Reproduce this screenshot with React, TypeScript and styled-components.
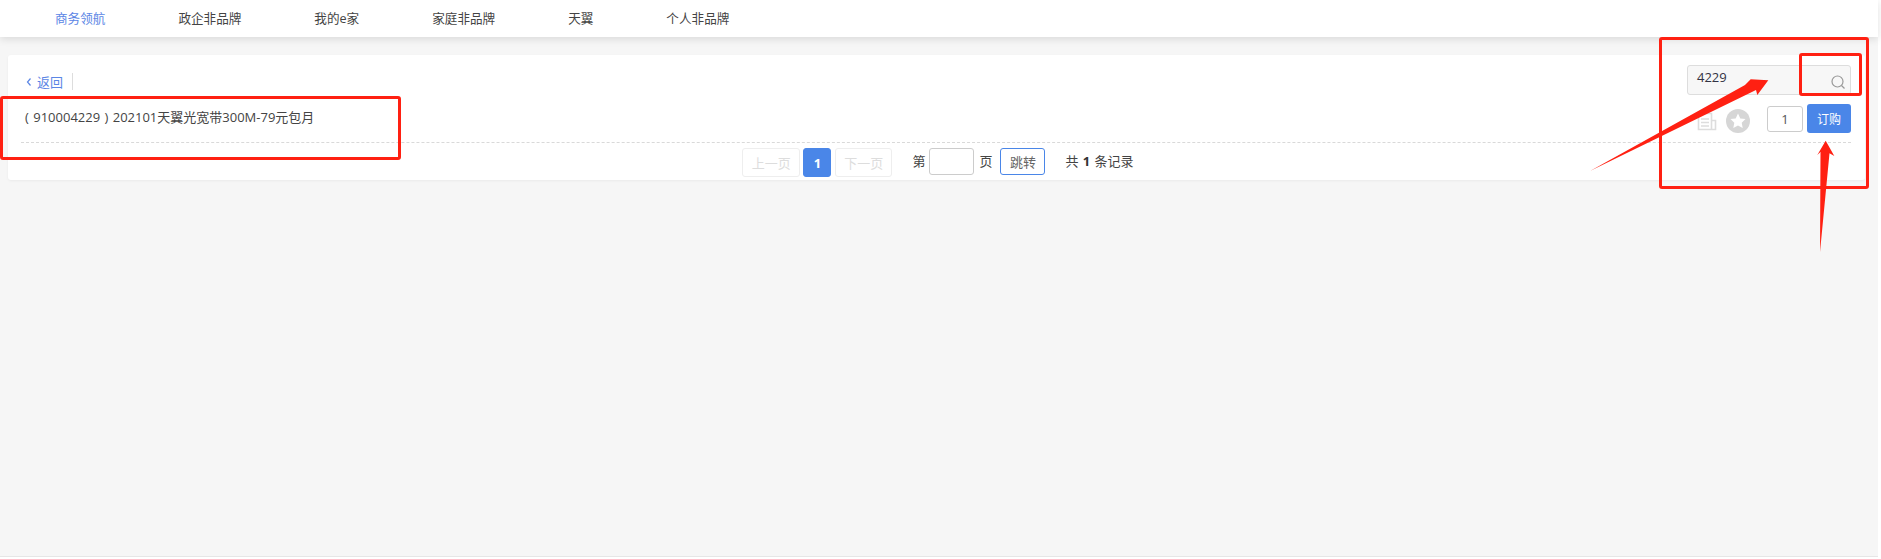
import React from "react";
import styled, { createGlobalStyle } from "styled-components";

const Global = createGlobalStyle`
  html, body { margin: 0; padding: 0; background: #fff; }
  body { font-family: "Open Sans", "Noto Sans CJK SC", sans-serif; font-size: 13px; color: #444; }
  * { box-sizing: border-box; }
`;

const Page = styled.div`
  position: relative;
  width: 1881px;
  height: 559px;
  overflow: hidden;
  display: flex;
  flex-direction: column;
  padding-right: 3px;
  background: #fff;
`;
const Nav = styled.nav`
  height: 37px;
  flex: none;
  display: flex;
  align-items: center;
  gap: 73px;
  padding-left: 55px;
  background: #fff;
  box-shadow: 0 2px 8px rgba(0, 0, 0, 0.12);
  position: relative;
  z-index: 1;
`;
const NavItem = styled.a<{ $active?: boolean }>`
  font-size: 12.6px;
  line-height: 18px;
  white-space: nowrap;
  color: ${(p) => (p.$active ? "#5b86e5" : "#444")};
`;
const Body = styled.main`
  flex: 1;
  background: #f6f6f6;
  padding: 18px 13px 0 8px;
  border-bottom: 1px solid #e6e6e6;
  margin-bottom: 2px;
`;
const Card = styled.section`
  height: 125px;
  background: #fff;
  border-radius: 3px;
  padding: 10px 14px 0 13px;
  box-shadow: 0 1px 3px rgba(0, 0, 0, 0.05);
`;
const TopRow = styled.div`
  display: flex;
  justify-content: space-between;
  height: 30px;
`;
const BackLink = styled.a`
  margin: 8px 0 0 5px;
  height: 17px;
  padding-right: 9px;
  border-right: 1px solid #ddd;
  display: flex;
  align-items: center;
  gap: 5px;
  font-size: 13px;
  color: #5b86e5;
`;
const SearchBox = styled.div`
  position: relative;
  width: 164px;
  height: 30px;
  background: #f7f7f7;
  border: 1px solid #ddd;
  border-radius: 3px;
  padding: 0 9px;
  font-size: 13px;
  line-height: 23px;
  color: #334;
`;
const SearchIcon = styled.svg`
  position: absolute;
  right: 4px;
  bottom: 4px;
`;
const ItemRow = styled.div`
  height: 48px;
  display: flex;
  align-items: center;
  justify-content: space-between;
  padding: 9px 0 9px 4px;
  border-bottom: 1px dashed #d9d9d9;
`;
const Title = styled.span`
  font-size: 13px;
  color: #444;
  white-space: pre;
  word-spacing: 1px;
  margin-top: -4px;
`;
const Actions = styled.div`
  display: flex;
  align-items: center;
`;
const IconGroup = styled.div`
  display: flex;
  align-items: center;
  gap: 9px;
  margin: 5px 17px 0 0;
`;
const Qty = styled.div`
  width: 36px;
  height: 26px;
  margin-right: 4px;
  border: 1px solid #ccc;
  border-radius: 3px;
  display: flex;
  align-items: center;
  justify-content: center;
  font-size: 13px;
  color: #555;
`;
const Order = styled.button`
  width: 44px;
  height: 29px;
  padding: 0;
  border: 0;
  border-radius: 3px;
  background: #4a86e8;
  color: #fff;
  font: 12px "Open Sans", "Noto Sans CJK SC", sans-serif;
`;
const Pagination = styled.div`
  display: flex;
  align-items: flex-start;
  justify-content: center;
  margin-top: 5px;
  padding-left: 4px;
  font-size: 13px;
  color: #444;
`;
const PageBtn = styled.span<{ $w: number; $current?: boolean; $mr: number }>`
  width: ${(p) => p.$w}px;
  height: 29px;
  margin-right: ${(p) => p.$mr}px;
  display: flex;
  align-items: center;
  justify-content: center;
  border-radius: 3px;
  border: 1px solid ${(p) => (p.$current ? "#4a86e8" : "#eee")};
  background: ${(p) => (p.$current ? "#4a86e8" : "#fff")};
  color: ${(p) => (p.$current ? "#fff" : "#ddd")};
  font-weight: ${(p) => (p.$current ? 700 : 400)};
  font-size: 13px;
`;
const PageLabel = styled.span<{ $mr: number }>`
  height: 27px;
  line-height: 27px;
  margin-right: ${(p) => p.$mr}px;
  white-space: pre;
  word-spacing: 1px;
`;
const PageInput = styled.div`
  width: 45px;
  height: 27px;
  margin-right: 5px;
  border: 1px solid #ccc;
  border-radius: 3px;
`;
const Jump = styled.span`
  width: 45px;
  height: 27px;
  margin-right: 20px;
  border: 1px solid #4a86e8;
  border-radius: 3px;
  display: flex;
  align-items: center;
  justify-content: center;
  color: #666;
`;
const Strong = styled.b`
  font-weight: 700;
  color: #333;
`;
const MarkBox = styled.div<{ $l: number; $t: number; $w: number; $h: number }>`
  position: absolute;
  left: ${(p) => p.$l}px;
  top: ${(p) => p.$t}px;
  width: ${(p) => p.$w}px;
  height: ${(p) => p.$h}px;
  border: 3px solid #ff2012;
  border-radius: 3px;
  z-index: 2;
`;
const Arrows = styled.svg`
  position: absolute;
  left: 0;
  top: 0;
  z-index: 3;
`;

export default function App() {
  return (
    <Page>
      <Global />
      <Nav>
        <NavItem $active>商务领航</NavItem>
        <NavItem>政企非品牌</NavItem>
        <NavItem>我的e家</NavItem>
        <NavItem>家庭非品牌</NavItem>
        <NavItem>天翼</NavItem>
        <NavItem>个人非品牌</NavItem>
      </Nav>
      <Body>
        <Card>
          <TopRow>
            <BackLink>
              <svg width="6" height="10" viewBox="0 0 6 10">
                <path d="M4.5 1.5 1.5 5l3 3.5" fill="none" stroke="#5b86e5" strokeWidth="1.2" />
              </svg>
              返回
            </BackLink>
            <SearchBox>
              4229
              <SearchIcon width="16" height="16" viewBox="0 0 16 16">
                <circle cx="7.5" cy="7.5" r="5.5" fill="none" stroke="#999" strokeWidth="1.2" />
                <path d="M11.5 11.5 14.5 14.5" stroke="#999" strokeWidth="1.2" />
              </SearchIcon>
            </SearchBox>
          </TopRow>
          <ItemRow>
            <Title>( 910004229 ) 202101天翼光宽带300M-79元包月</Title>
            <Actions>
              <IconGroup>
                <svg width="20" height="19" viewBox="0 0 20 19">
                  <path d="M1.5 1.5h13v16h-13zM14.5 8.5h4v9h-4" fill="none" stroke="#ddd" strokeWidth="1.6" />
                  <path d="M4 7h8M4 10.5h8M4 14h8" stroke="#ddd" strokeWidth="1.4" />
                </svg>
                <svg width="24" height="24" viewBox="0 0 24 24">
                  <circle cx="12" cy="12" r="12" fill="#d6d6d6" />
                  <path d="M12 4.5l2.3 4.9 5.2.7-3.8 3.6 1 5.3-4.7-2.6-4.7 2.6 1-5.3-3.8-3.6 5.2-.7z" fill="#fff" />
                </svg>
              </IconGroup>
              <Qty>1</Qty>
              <Order>订购</Order>
            </Actions>
          </ItemRow>
          <Pagination>
            <PageBtn $w={58} $mr={3}>上一页</PageBtn>
            <PageBtn $w={28} $mr={4} $current>1</PageBtn>
            <PageBtn $w={57} $mr={20}>下一页</PageBtn>
            <PageLabel $mr={4}>第</PageLabel>
            <PageInput />
            <PageLabel $mr={8}>页</PageLabel>
            <Jump>跳转</Jump>
            <PageLabel $mr={0}>共 <Strong>1</Strong> 条记录</PageLabel>
          </Pagination>
        </Card>
      </Body>
      <MarkBox $l={0} $t={96} $w={401} $h={64} />
      <MarkBox $l={1659} $t={37} $w={210} $h={152} />
      <MarkBox $l={1799} $t={53} $w={63} $h={43} />
      <Arrows width="1881" height="559" viewBox="0 0 1881 559">
        <polygon points="1590,171 1745,85 1750.7,79.3 1768.3,80.3 1757.3,95 1756,90" fill="#ff2012" />
        <polygon points="1820,252 1820.5,152 1817.3,155 1825.7,140.7 1834.3,156 1829.5,153.3" fill="#ff2012" />
      </Arrows>
    </Page>
  );
}
